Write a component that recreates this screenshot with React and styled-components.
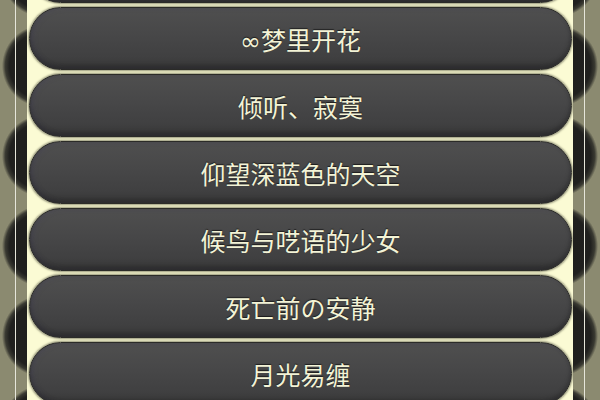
import React from 'react';
import styled, { createGlobalStyle, css } from 'styled-components';

// first row is scrolled mostly out of view, so it carries no title
const songs = [
  '',
  '∞梦里开花',
  '倾听、寂寞',
  '仰望深蓝色的天空',
  '候鸟与呓语的少女',
  '死亡前の安静',
  '月光易缠',
];

const GlobalStyle = createGlobalStyle`
  html, body {
    margin: 0;
    padding: 0;
    background: #8b8a70;
  }
`;

const Screen = styled.div`
  width: 600px;
  height: 400px;
  overflow: hidden;
  display: flex;
  font-family: "DejaVu Sans", "Noto Sans CJK SC", sans-serif;
`;

const blob = (x) =>
  `radial-gradient(circle 41px at ${x} 50%, #1e1e1c 0, #20201e 82%, #3a3a32 92%, rgba(139, 138, 112, 0) 100%)`;

// side strips: blurred dark pills stacked behind a thin light rule
const Rail = styled.div`
  flex: 0 0 27px;
  background-color: #8b8a70;
  background-repeat: no-repeat, repeat-y;
  ${({ $side }) =>
    $side === 'left'
      ? css`
          background-image:
            linear-gradient(to right, transparent 15px, #e6e6da 15px, #e6e6da 16px, transparent 16px),
            ${blob('43px')};
        `
      : css`
          background-image:
            linear-gradient(to right, transparent 11px, #e6e6da 11px, #e6e6da 12px, transparent 12px),
            ${blob('-16px')};
        `}
  background-size: 100% 100%, 100% 90px;
  background-position: 0 0, 0 21px;
`;

const Panel = styled.div`
  flex: 1;
  background: #fbfbd4;
  padding: 0 1px 0 2px;
`;

const List = styled.ul`
  list-style: none;
  margin: -60px 0 0;
  padding: 0;
  display: flex;
  flex-direction: column;
  gap: 4px;
`;

const Item = styled.li`
  height: 63px;
  box-sizing: border-box;
  border-radius: 32px;
  border: 1px solid #2b2b28;
  background: linear-gradient(#4f4f4f 0%, #474748 45%, #404041 80%, #363636 100%);
  box-shadow:
    0 0 2px 1px rgba(50, 50, 36, 0.5),
    inset 0 -3px 4px rgba(20, 20, 20, 0.35),
    inset 3px 0 5px rgba(70, 68, 100, 0.25);
  display: flex;
  align-items: center;
  justify-content: center;
  padding-top: 1px;
  color: #f3f3d6;
  font-size: 25px;
  text-shadow: 0 -1px 1px rgba(0, 0, 0, 0.6);
`;

export default function App() {
  return (
    <>
      <GlobalStyle />
      <Screen>
        <Rail $side="left" />
        <Panel>
          <List>
            {songs.map((title, i) => (
              <Item key={i}>{title}</Item>
            ))}
          </List>
        </Panel>
        <Rail $side="right" />
      </Screen>
    </>
  );
}
